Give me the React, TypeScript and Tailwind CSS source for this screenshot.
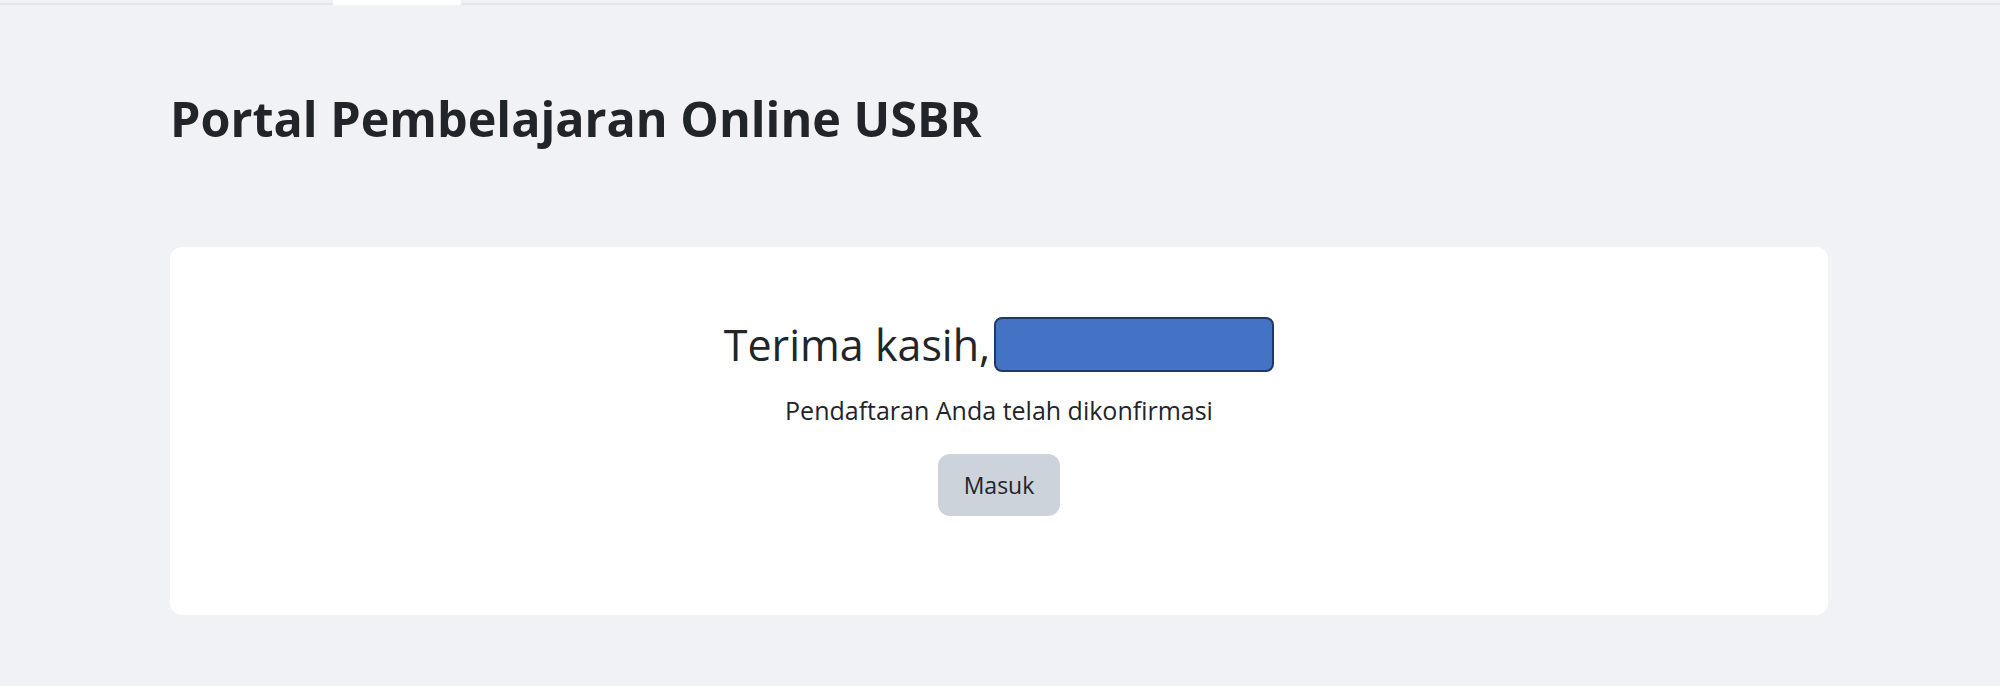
import React from 'react'

export default function App() {
    return (
        <div
            className="min-h-[686px] w-full bg-[#f1f2f6] text-[#212529]"
            style={{ fontFamily: '"Open Sans", "Noto Sans", sans-serif' }}
        >
            {/* Top nav border with active tab */}
            <div className="flex h-[5px] border-b-2 border-[#e2e5ea]">
                <div className="w-[333px]" />
                <div className="h-[5px] w-[128px] bg-white" />
            </div>

            <div className="pl-[170px] pr-[172px]">
                <h1 className="pt-[81px] text-[48.5px] font-bold leading-[64px]">
                    Portal Pembelajaran Online USBR
                </h1>

                {/* Confirmation card */}
                <div className="mt-[97px] flex h-[368px] flex-col items-center rounded-[12px] bg-white pt-[70px]">
                    <div className="flex items-center">
                        <span className="text-[43px] leading-[55px]">Terima kasih,</span>
                        <span className="ml-[4px] h-[55px] w-[280px] rounded-[8px] border-2 border-[#1f3864] bg-[#4472c4]" />
                    </div>
                    <p className="mt-[22px] text-[25px] leading-[32px]">
                        Pendaftaran Anda telah dikonfirmasi
                    </p>
                    <button className="mt-[28px] h-[62px] w-[122px] rounded-[12px] bg-[#cdd3da] text-[23px] text-[#212529]">
                        Masuk
                    </button>
                </div>
            </div>
        </div>
    )
}
